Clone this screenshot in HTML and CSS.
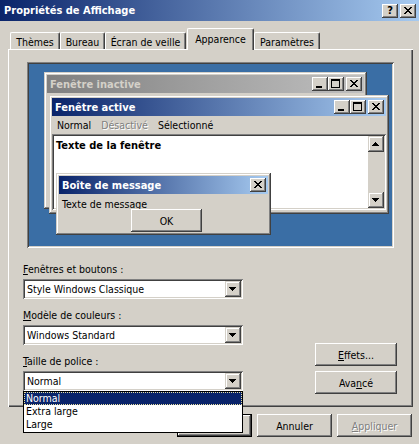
FILE: index.html
```html
<!DOCTYPE html>
<html>
<head>
<meta charset="utf-8">
<title>Propriétés de Affichage</title>
<link rel="stylesheet" href="styles.css">
</head>
<body>
<div class="dialog">
  <div class="titlebar">
    <span class="title">Propriétés de Affichage</span>
    <div class="tbtns">
      <span class="capbtn help">?</span>
      <span class="capbtn close"><svg width="16" height="14" viewBox="0 0 16 14" shape-rendering="crispEdges"><path d="M4 3h2v1h-2zM10 3h2v1h-2zM5 4h2v1h-2zM9 4h2v1h-2zM6 5h4v1h-4zM7 6h2v1h-2zM6 7h4v1h-4zM5 8h2v1h-2zM9 8h2v1h-2zM4 9h2v1h-2zM10 9h2v1h-2z"/></svg></span>
    </div>
  </div>

  <div class="tabs">
    <div class="tab w-themes">Thèmes</div>
    <div class="tab w-bureau">Bureau</div>
    <div class="tab w-ecran">Écran de veille</div>
    <div class="tab sel w-app">Apparence</div>
    <div class="tab w-param">Paramètres</div>
  </div>

  <div class="panel">
    <div class="preview">
      <div class="win inactive">
        <div class="wtitle gray">
          <span class="wt">Fenêtre inactive</span>
          <div class="wbtns">
            <span class="capbtn"><svg width="16" height="14" viewBox="0 0 16 14" shape-rendering="crispEdges"><path d="M4 9h6v2h-6z"/></svg></span>
            <span class="capbtn"><svg width="16" height="14" viewBox="0 0 16 14" shape-rendering="crispEdges"><path d="M3 2h9v2h-9zM3 4h1v7h-1zM11 4h1v7h-1zM3 10h9v1h-9z"/></svg></span>
            <span class="capbtn gapl"><svg width="16" height="14" viewBox="0 0 16 14" shape-rendering="crispEdges"><path d="M4 3h2v1h-2zM10 3h2v1h-2zM5 4h2v1h-2zM9 4h2v1h-2zM6 5h4v1h-4zM7 6h2v1h-2zM6 7h4v1h-4zM5 8h2v1h-2zM9 8h2v1h-2zM4 9h2v1h-2zM10 9h2v1h-2z"/></svg></span>
          </div>
        </div>
      </div>

      <div class="win active">
        <div class="wtitle blue">
          <span class="wt">Fenêtre active</span>
          <div class="wbtns">
            <span class="capbtn"><svg width="16" height="14" viewBox="0 0 16 14" shape-rendering="crispEdges"><path d="M4 9h6v2h-6z"/></svg></span>
            <span class="capbtn"><svg width="16" height="14" viewBox="0 0 16 14" shape-rendering="crispEdges"><path d="M3 2h9v2h-9zM3 4h1v7h-1zM11 4h1v7h-1zM3 10h9v1h-9z"/></svg></span>
            <span class="capbtn gapl"><svg width="16" height="14" viewBox="0 0 16 14" shape-rendering="crispEdges"><path d="M4 3h2v1h-2zM10 3h2v1h-2zM5 4h2v1h-2zM9 4h2v1h-2zM6 5h4v1h-4zM7 6h2v1h-2zM6 7h4v1h-4zM5 8h2v1h-2zM9 8h2v1h-2zM4 9h2v1h-2zM10 9h2v1h-2z"/></svg></span>
          </div>
        </div>
        <div class="menu">
          <span class="mi">Normal</span>
          <span class="mi dis">Désactivé</span>
          <span class="mi">Sélectionné</span>
        </div>
        <div class="textarea">
          <div class="tcontent">Texte de la fenêtre</div>
          <div class="vscroll">
            <span class="sbtn"><svg width="16" height="16" viewBox="0 0 16 16" shape-rendering="crispEdges"><path d="M7 6h1v1h-1zM6 7h3v1h-3zM5 8h5v1h-5zM4 9h7v1h-7z"/></svg></span>
            <span class="track"></span>
            <span class="sbtn"><svg width="16" height="16" viewBox="0 0 16 16" shape-rendering="crispEdges"><path d="M4 6h7v1h-7zM5 7h5v1h-5zM6 8h3v1h-3zM7 9h1v1h-1z"/></svg></span>
          </div>
        </div>
      </div>

      <div class="win msg">
        <div class="wtitle blue">
          <span class="wt">Boîte de message</span>
          <div class="wbtns">
            <span class="capbtn"><svg width="16" height="14" viewBox="0 0 16 14" shape-rendering="crispEdges"><path d="M4 3h2v1h-2zM10 3h2v1h-2zM5 4h2v1h-2zM9 4h2v1h-2zM6 5h4v1h-4zM7 6h2v1h-2zM6 7h4v1h-4zM5 8h2v1h-2zM9 8h2v1h-2zM4 9h2v1h-2zM10 9h2v1h-2z"/></svg></span>
          </div>
        </div>
        <div class="mbody">
          <div class="mtext">Texte de message</div>
          <span class="btn okmini">OK</span>
        </div>
      </div>
    </div>

    <div class="controls">
      <div class="fields">
        <div class="field">
          <div class="lbl"><u>F</u>enêtres et boutons :</div>
          <div class="combo"><span class="cval">Style Windows Classique</span><span class="dd"><svg width="16" height="16" viewBox="0 0 16 16" shape-rendering="crispEdges"><path d="M4 6h7v1h-7zM5 7h5v1h-5zM6 8h3v1h-3zM7 9h1v1h-1z"/></svg></span></div>
        </div>
        <div class="field">
          <div class="lbl"><u>M</u>odèle de couleurs :</div>
          <div class="combo"><span class="cval">Windows Standard</span><span class="dd"><svg width="16" height="16" viewBox="0 0 16 16" shape-rendering="crispEdges"><path d="M4 6h7v1h-7zM5 7h5v1h-5zM6 8h3v1h-3zM7 9h1v1h-1z"/></svg></span></div>
        </div>
        <div class="field">
          <div class="lbl"><u>T</u>aille de police :</div>
          <div class="combo open"><span class="cval">Normal</span><span class="dd"><svg width="16" height="16" viewBox="0 0 16 16" shape-rendering="crispEdges"><path d="M4 6h7v1h-7zM5 7h5v1h-5zM6 8h3v1h-3zM7 9h1v1h-1z"/></svg></span>
            <div class="droplist">
              <div class="opt hl">Normal</div>
              <div class="opt">Extra large</div>
              <div class="opt">Large</div>
            </div>
          </div>
        </div>
      </div>
      <div class="side">
        <span class="btn side-btn"><u>E</u>ffets...</span>
        <span class="btn side-btn">Ava<u>n</u>cé</span>
      </div>
    </div>
  </div>

  <div class="footer">
    <span class="btn fbtn default">OK</span>
    <span class="btn fbtn">Annuler</span>
    <span class="btn fbtn disabled"><u>A</u>ppliquer</span>
  </div>
</div>
</body>
</html>
```

FILE: styles.css
```css
* { box-sizing: border-box; }
html, body { margin: 0; padding: 0; }
body {
  width: 419px;
  height: 444px;
  overflow: hidden;
  background: #d4d0c8;
  font-family: "DejaVu Sans", "Liberation Sans", sans-serif;
  font-stretch: condensed;
  font-size: 10.5px;
  color: #000;
}
.dialog { width: 419px; height: 444px; }

/* title bar */
.titlebar {
  height: 21px;
  background: linear-gradient(to right, #0a246a 0%, #a6caf0 100%);
  display: flex;
  align-items: center;
  justify-content: space-between;
  padding: 0 3px 0 4px;
}
.title { color: #fff; font-weight: bold; font-size: 11px; }
.tbtns { display: flex; gap: 2px; }

.capbtn {
  display: flex;
  align-items: center;
  justify-content: center;
  width: 16px;
  height: 14px;
  background: #d4d0c8;
  box-shadow: inset -1px -1px #404040, inset 1px 1px #fff, inset -2px -2px #808080, inset 2px 2px #d4d0c8;
}
.capbtn svg { display: block; fill: #000; }
.help { font-weight: bold; font-size: 11px; font-family: "DejaVu Sans", sans-serif; line-height: 14px; }

/* tabs */
.tabs {
  height: 21px;
  margin-top: 7px;
  padding-left: 10px;
  display: flex;
  align-items: flex-end;
}
.tab {
  height: 17px;
  display: flex;
  align-items: center;
  justify-content: center;
  padding-top: 1px;
  border-top: 1px solid #fff;
  border-left: 1px solid #fff;
  border-right: 1px solid #404040;
  border-radius: 2px 2px 0 0;
  box-shadow: inset -1px 0 #808080;
  white-space: nowrap;
}
.w-themes { width: 50px; }
.w-bureau { width: 45px; }
.w-ecran { width: 81px; }
.w-app { width: 67px; margin-left: 1px; }
.w-param { width: 66px; }
.tab.sel {
  height: 22px;
  margin-bottom: -1px;
  padding-bottom: 3px;
  position: relative;
  z-index: 1;
  background: #d4d0c8;
}

/* panel */
.panel {
  width: 405px;
  height: 358px;
  margin-left: 8px;
  padding: 13px 16px 0 15px;
  box-shadow: inset 1px 1px #fff, inset -1px -1px #404040, inset -2px -2px #808080;
}

.preview {
  position: relative;
  width: 367px;
  height: 186px;
  margin-left: 4px;
  background: #3a6ea5;
  box-shadow: inset 1px 1px #808080, inset -1px -1px #fff, inset 2px 2px #404040, inset -2px -2px #d4d0c8;
}

.win {
  position: absolute;
  background: #d4d0c8;
  padding: 3px;
  display: flex;
  flex-direction: column;
  box-shadow: inset -1px -1px #404040, inset 1px 1px #d4d0c8, inset -2px -2px #808080, inset 2px 2px #fff;
}
.inactive { left: 17px; top: 10px; width: 323px; height: 137px; }
.active { left: 22px; top: 33px; width: 340px; height: 119px; }
.msg { left: 29px; top: 111px; width: 215px; height: 62px; }

.wtitle {
  height: 18px;
  display: flex;
  align-items: center;
  justify-content: space-between;
  padding: 0 2px 0 3px;
  flex: none;
}
.wtitle.blue { background: linear-gradient(to right, #0a246a 0%, #a6caf0 100%); }
.wtitle.gray { background: linear-gradient(to right, #808080 0%, #c0c0c0 100%); }
.wt { color: #fff; font-weight: bold; font-size: 11px; }
.gray .wt { color: #d4d0c8; }
.wbtns { display: flex; }
.wbtns .gapl { margin-left: 2px; }

.menu { height: 18px; display: flex; align-items: center; flex: none; }
.mi { padding: 0 5px; }
.mi.dis { color: #808080; text-shadow: 1px 1px #fff; }

.textarea {
  height: 76px;
  background: #fff;
  padding: 2px;
  display: flex;
  box-shadow: inset 1px 1px #808080, inset -1px -1px #fff, inset 2px 2px #404040, inset -2px -2px #d4d0c8;
}
.tcontent { flex: 1; font-weight: bold; font-size: 11px; padding: 3px 0 0 2px; }
.vscroll { width: 16px; display: flex; flex-direction: column; background: #d4d0c8; }
.sbtn {
  width: 16px;
  height: 16px;
  background: #d4d0c8;
  box-shadow: inset -1px -1px #404040, inset 1px 1px #d4d0c8, inset -2px -2px #808080, inset 2px 2px #fff;
}
.sbtn svg { display: block; fill: #000; }
.track { flex: 1; }

.mbody { padding: 4px 3px 0 3px; }
.mtext { height: 13px; line-height: 13px; }
.btn {
  display: flex;
  align-items: center;
  justify-content: center;
  background: #d4d0c8;
  box-shadow: inset -1px -1px #404040, inset 1px 1px #fff, inset -2px -2px #808080, inset 2px 2px #d4d0c8;
}
.okmini {
  position: relative;
  width: 71px;
  height: 23px;
  margin: -2px 0 0 69px;
}

/* controls */
.controls { display: flex; justify-content: space-between; align-items: flex-start; margin-top: 15px; }
.fields { width: 220px; display: flex; flex-direction: column; gap: 10px; }
.lbl { height: 13px; line-height: 13px; margin-bottom: 3px; }
.combo {
  position: relative;
  height: 20px;
  background: #fff;
  padding: 2px;
  display: flex;
  align-items: center;
  box-shadow: inset 1px 1px #808080, inset -1px -1px #fff, inset 2px 2px #404040, inset -2px -2px #d4d0c8;
}
.cval { flex: 1; padding-left: 2px; }
.dd {
  width: 16px;
  height: 16px;
  background: #d4d0c8;
  box-shadow: inset -1px -1px #404040, inset 1px 1px #d4d0c8, inset -2px -2px #808080, inset 2px 2px #fff;
}
.dd svg { display: block; fill: #000; }

.droplist {
  position: absolute;
  left: 0;
  top: 100%;
  width: 220px;
  height: 42px;
  background: #fff;
  border: 1px solid #000;
  z-index: 5;
}
.opt { height: 13px; line-height: 12px; padding-left: 2px; }
.opt.hl { background: #0a246a; color: #fff; outline: 1px dotted #e8e0a0; outline-offset: -1px; }

.side { display: flex; flex-direction: column; gap: 5px; margin-top: 80px; }
.side-btn { width: 82px; height: 23px; }

/* footer */
.footer { display: flex; justify-content: flex-end; gap: 5px; margin-top: 7px; padding-right: 7px; }
.fbtn { width: 75px; height: 23px; }
.fbtn.default {
  box-shadow: inset 0 0 0 1px #000, inset -2px -2px #404040, inset 2px 2px #fff, inset -3px -3px #808080;
}
.fbtn.disabled { color: #808080; text-shadow: 1px 1px #fff; }
```
